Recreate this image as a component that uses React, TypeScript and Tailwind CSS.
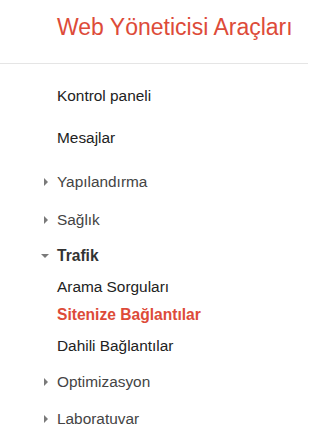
import React from "react";

type Item = {
  label: string;
  kind: "plain" | "collapsed" | "expanded" | "sub" | "active";
  mt: string;
};

const items: Item[] = [
  { label: "Kontrol paneli", kind: "plain", mt: "mt-[22px]" },
  { label: "Mesajlar", kind: "plain", mt: "mt-[22px]" },
  { label: "Yapılandırma", kind: "collapsed", mt: "mt-[24px]" },
  { label: "Sağlık", kind: "collapsed", mt: "mt-[18px]" },
  { label: "Trafik", kind: "expanded", mt: "mt-[16px]" },
  { label: "Arama Sorguları", kind: "sub", mt: "mt-[11px]" },
  { label: "Sitenize Bağlantılar", kind: "active", mt: "mt-[8px]" },
  { label: "Dahili Bağlantılar", kind: "sub", mt: "mt-[11px]" },
  { label: "Optimizasyon", kind: "collapsed", mt: "mt-[16px]" },
  { label: "Laboratuvar", kind: "collapsed", mt: "mt-[17px]" },
];

function Arrow({ kind }: { kind: Item["kind"] }) {
  if (kind === "collapsed") {
    return (
      <span className="ml-[4px] block h-0 w-0 border-y-[4px] border-l-[4px] border-y-transparent border-l-[#7a7a7a]" />
    );
  }
  if (kind === "expanded") {
    return (
      <span className="ml-[1px] block h-0 w-0 border-x-[4px] border-t-[4px] border-x-transparent border-t-[#7a7a7a]" />
    );
  }
  return null;
}

function labelClass(kind: Item["kind"]) {
  switch (kind) {
    case "plain":
    case "sub":
      return "text-[15.4px] text-[#222222]";
    case "collapsed":
      return "text-[15.4px] text-[#444444]";
    case "expanded":
      return "text-[15.6px] font-bold text-[#333333]";
    case "active":
      return "text-[15.6px] font-bold text-[#dd4b39]";
  }
}

export default function App() {
  return (
    <div className="h-[446px] w-[314px] overflow-hidden bg-white font-['Liberation_Sans',Arial,sans-serif]">
      <div className="w-[308px] border-b border-[#e5e5e5] pt-[15px] pb-[24px]">
        <div className="pl-[57px] text-[23px] leading-[24px] text-[#dd4b39]">
          Web Yöneticisi Araçları
        </div>
      </div>
      <nav className="flex flex-col">
        {items.map((it) => (
          <div key={it.label} className={`flex h-[20px] items-center pl-[40px] ${it.mt}`}>
            <span className="flex w-[17px] items-center">
              <Arrow kind={it.kind} />
            </span>
            <span className={`leading-[20px] ${labelClass(it.kind)}`}>{it.label}</span>
          </div>
        ))}
      </nav>
    </div>
  );
}
